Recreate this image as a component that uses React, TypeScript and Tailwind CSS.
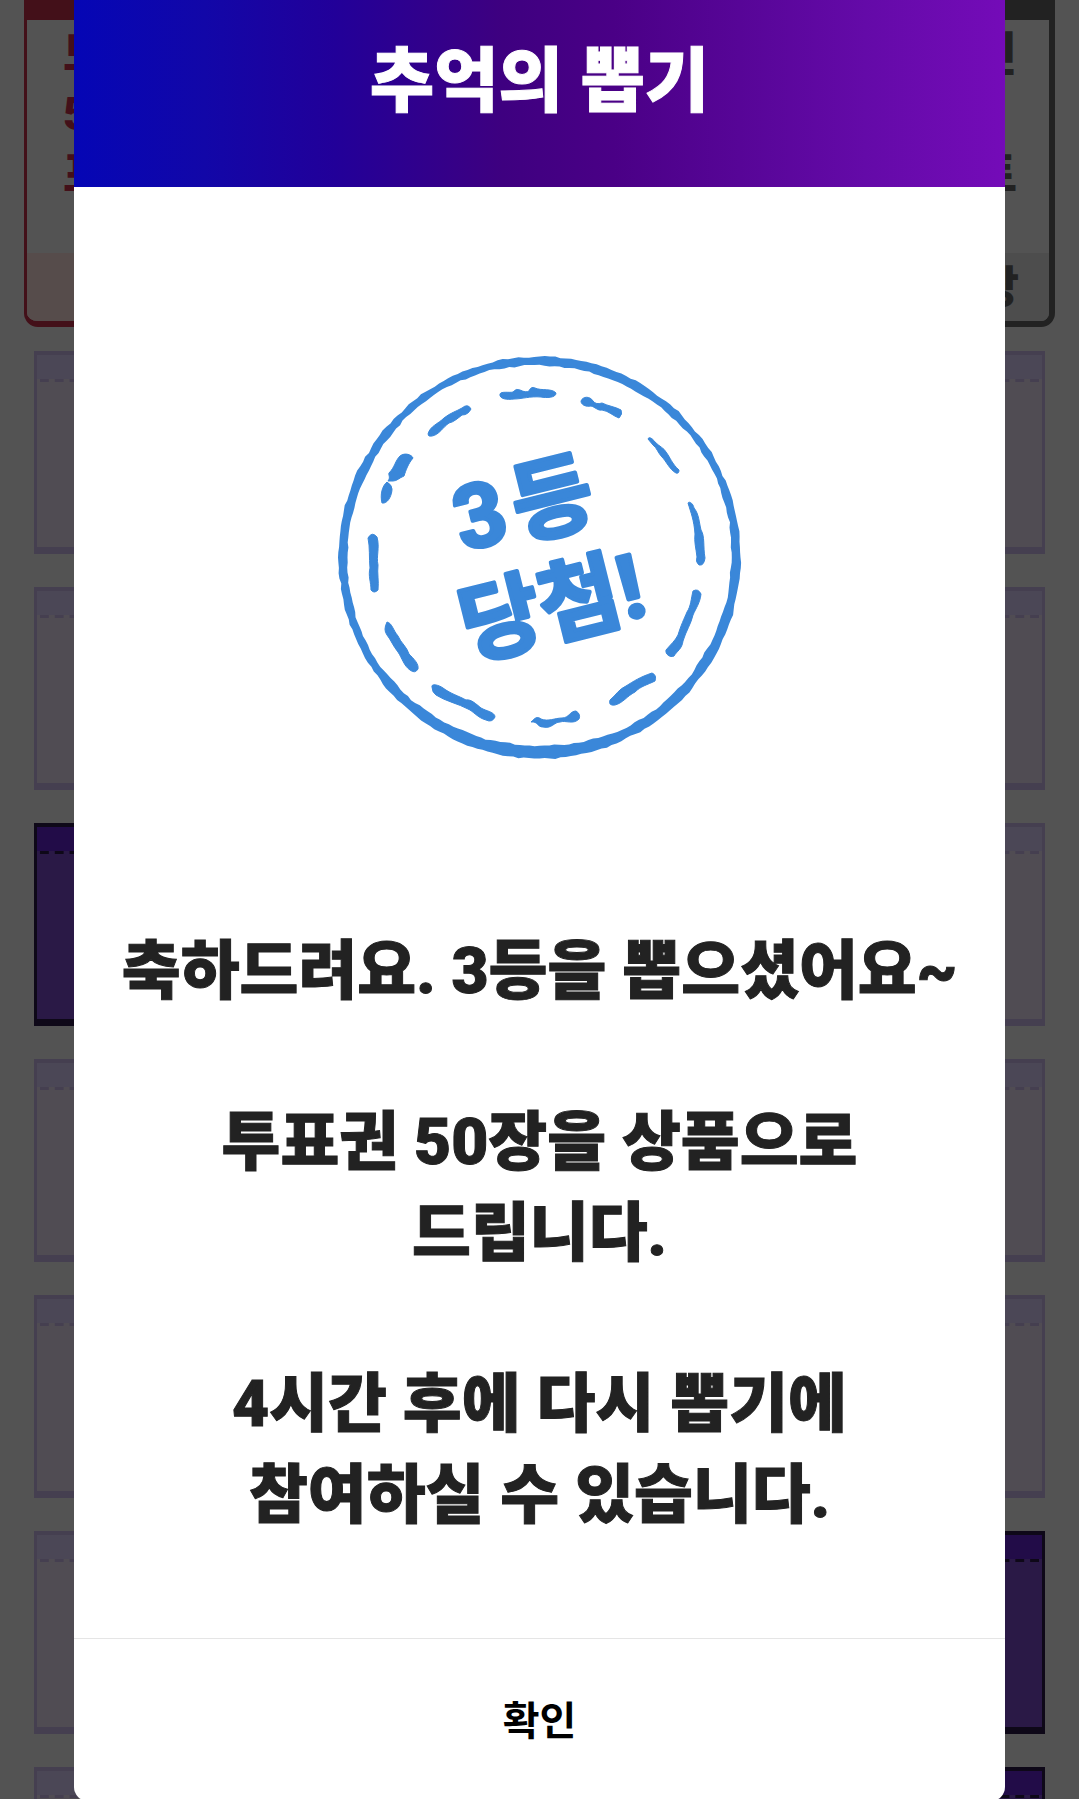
const FONT = "font-['Roboto','Noto_Sans_CJK_KR',sans-serif]";

type TicketTone = "used" | "open";

const ticketTones: Record<TicketTone, { box: string; top: string; dash: string }> = {
  used: {
    box: "border-[#453f50] bg-[#504c53]",
    top: "bg-[#4b4756]",
    dash: "bg-[linear-gradient(90deg,transparent_20%,#453f50_20%,#453f50_80%,transparent_80%)]",
  },
  open: {
    box: "border-[#0e0818] bg-[#2a1946]",
    top: "bg-[#220c48]",
    dash: "bg-[linear-gradient(90deg,transparent_20%,#0e0818_20%,#0e0818_80%,transparent_80%)]",
  },
};

const ticketRows: TicketTone[][] = [
  ["used", "used", "used", "used"],
  ["used", "used", "used", "used"],
  ["open", "used", "used", "used"],
  ["used", "used", "used", "used"],
  ["used", "used", "used", "used"],
  ["used", "used", "used", "open"],
  ["used", "used", "used", "open"],
];

function Ticket({ tone }: { tone: TicketTone }) {
  const t = ticketTones[tone];
  return (
    <div className={`h-[203px] border-x-3 border-t-4 border-b-7 ${t.box}`}>
      <div className={`h-6 ${t.top}`} />
      <div className={`h-[3px] bg-repeat-round bg-size-[15px_3px] ${t.dash}`} />
    </div>
  );
}

type PrizeCardProps = {
  lines: string[];
  count: string;
  frame: string;
  head: string;
  foot: string;
  align: string;
};

function PrizeCard({ lines, count, frame, head, foot, align }: PrizeCardProps) {
  return (
    <div
      className={`flex h-[327px] flex-col overflow-hidden rounded-b-[14px] border-b-6 border-l-3 font-black ${frame}`}
    >
      <div className={`h-5 shrink-0 ${head}`} />
      <div className={`flex-1 pt-1 pr-8 pl-9 text-[46px] ${align}`}>
        {lines.map((line, i) => (
          <p key={i} className="h-[60px] leading-[60px] whitespace-nowrap">
            {line}
          </p>
        ))}
      </div>
      <div className={`h-[68px] shrink-0 pr-[30px] text-[44px] leading-[70px] ${foot} ${align}`}>{count}</div>
    </div>
  );
}

// ring thickness every 30 degrees, clockwise from the right
const ringWidths = [9, 10, 10, 13, 11, 8, 9, 9, 7, 9, 9, 7];

function ringEdge(inner: boolean) {
  const points: string[] = [];
  for (let i = 0; i < 240; i++) {
    const deg = i * 1.5;
    const at = deg / 30;
    const from = ringWidths[Math.floor(at)];
    const to = ringWidths[(Math.floor(at) + 1) % 12];
    const width = from + (to - from) * (at % 1);
    const seed = inner ? 2.3 : 0;
    const rough =
      Math.sin(i * 0.7 + seed) * 0.4 + Math.sin(i * 1.9 + seed * 2) * 0.3 + Math.sin(i * i * 0.37 + seed) * 0.4;
    const r = (inner ? 201 - width : 201) + rough;
    const a = (deg * Math.PI) / 180;
    points.push(`${(219.5 + r * Math.cos(a)).toFixed(1)} ${(217.5 + r * Math.sin(a)).toFixed(1)}`);
  }
  return `M${points.join("L")}Z`;
}

const ringPath = ringEdge(false) + ringEdge(true);

const stitches = [
  "M180 54C181 51 190 53 193 52Q196 48 200 50Q206 53 209 51Q211 46 215 48C221 51 232 48 236 53C236 58 226 58 221 57C210 56 202 59 194 59C187 60 179 59 180 54Z",
  "M261 61C263 56 270 56 273 61Q276 65 282 63C288 66 296 67 301 70Q303 74 299 78C293 76 289 71 282 70C278 71 275 67 271 66C266 67 261 65 261 61Z",
  "M328 99C329 96 333 99 335 102C340 107 344 108 346 112C350 117 352 124 359 130Q359 134 356 133C350 130 346 121 342 117C338 113 337 108 333 105Z",
  "M368 163C369 161 373 163 374 168C379 174 379 182 381 190C385 196 383 207 385 218Q384 226 379 225Q375 222 377 217C376 208 374 202 375 194C374 180 371 173 368 163Z",
  "M373 251Q378 248 381 254C380 263 376 268 373 275C371 284 366 291 363 301C362 309 357 311 354 316C350 318 345 314 346 310C351 304 355 301 358 295C361 285 364 279 367 272C371 266 371 259 373 251Z",
  "M332 333Q337 335 335 341C327 345 321 346 315 352C307 356 303 363 295 365Q288 366 290 360C296 355 299 349 306 346C314 341 320 337 332 333Z",
  "M211 382C215 378 217 376 221 379C228 382 235 378 242 378C249 378 250 371 256 371Q261 374 259 379C253 385 246 380 240 382C234 382 232 389 223 387C217 387 218 381 211 382Z",
  "M112 347C111 343 119 345 123 348C131 354 139 356 146 360C151 359 156 364 161 368C166 371 175 372 175 377Q172 383 166 380C158 378 153 371 148 369C139 364 125 361 116 355Q112 352 112 347Z",
  "M67 282C72 283 73 290 78 296C81 303 87 307 89 314C94 319 99 324 98 329Q95 334 90 330C84 326 82 318 78 312C73 306 71 300 67 295Q63 290 67 282Z",
  "M48 198Q52 191 57 197C60 208 56 216 58 225C57 233 59 241 58 250Q54 254 51 250C51 242 48 236 50 228C49 218 50 207 48 198Z",
  "M62 163C60 155 62 146 67 142Q72 145 72 149C72 154 69 162 64 163ZM68 141C71 137 68 135 69 133C75 127 75 121 80 116C85 112 92 115 93 118C88 124 86 130 84 136C79 138 77 141 73 141Z",
  "M108 94C110 86 118 84 124 78C130 73 137 71 142 68Q148 63 151 69Q148 75 142 75C138 78 134 82 129 83C123 87 119 95 112 96Q108 97 108 94Z",
];

function Stamp() {
  return (
    <svg
      viewBox="0 0 440 440"
      className="h-[440px] w-[440px]"
      fill="#3a87d9"
      stroke="#3a87d9"
      strokeLinejoin="round"
      role="img"
      aria-label="3등 당첨!"
    >
      <path d={ringPath} fillRule="evenodd" strokeWidth="0" />
      {stitches.map((d) => (
        <path key={d} d={d} strokeWidth="1" />
      ))}
      <g className="text-[88px] font-bold" strokeWidth="4" transform="rotate(-14 144 212)">
        <text x="143" y="211">
          3
        </text>
        <text x="202" y="213">
          등
        </text>
        <text x="123" y="317">
          당첨!
        </text>
      </g>
    </svg>
  );
}

const messages = [
  ["축하드려요. 3등을 뽑으셨어요~"],
  ["투표권 50장을 상품으로", "드립니다."],
  ["4시간 후에 다시 뽑기에", "참여하실 수 있습니다."],
];

export default function App() {
  return (
    <div className={`relative h-screen min-h-[1799px] overflow-hidden bg-[#535353] ${FONT}`}>
      <div aria-hidden>
        <div className="grid grid-cols-3 gap-4 px-6">
          <PrizeCard
            lines={["모바일", "50장", "포인트"]}
            count="1장"
            frame="border-r-3 border-[#431019] text-[#431019]"
            head="bg-[#431019]"
            foot="bg-[#564c4b] pl-16"
            align="text-left"
          />
          <PrizeCard
            lines={[]}
            count=""
            frame="border-r-3 border-[#222]"
            head="bg-[#222]"
            foot="bg-[#4d4d4d]"
            align="text-center"
          />
          <PrizeCard
            lines={["할인", "", "포인트"]}
            count="50장"
            frame="border-r-6 border-[#222] text-[#222]"
            head="bg-[#222]"
            foot="bg-[#4d4d4d]"
            align="text-right"
          />
        </div>
        <div className="mt-6 grid grid-cols-4 gap-[33px] px-[34px]">
          {ticketRows.flatMap((row, r) => row.map((tone, c) => <Ticket key={`${r}-${c}`} tone={tone} />))}
        </div>
      </div>
      <section
        role="dialog"
        aria-labelledby="draw-title"
        className="absolute inset-x-[74px] top-0 flex flex-col overflow-hidden rounded-b-[14px] bg-white"
      >
        <h1
          id="draw-title"
          className="h-[187px] bg-[linear-gradient(90deg,#0506b5,#1207a8_14%,#220099_28%,#3e0080_46%,#4a0086_58%,#640aa8_85%,#740bb8)] pt-[26px] text-center text-[70px] leading-[112px] font-black text-white [-webkit-text-stroke:1px]"
        >
          추억의 뽑기
        </h1>
        <div className="flex justify-center pt-[153px] pb-[146px]">
          <Stamp />
        </div>
        <div className="flex flex-col gap-20 text-center text-[64px] leading-[91px] font-black text-[#222] [-webkit-text-stroke:1px]">
          {messages.map((lines) => (
            <p key={lines[0]}>
              {lines.map((line) => (
                <span key={line} className="block">
                  {line}
                </span>
              ))}
            </p>
          ))}
        </div>
        <button
          type="button"
          className="mt-[97px] h-[163px] border-t border-[#e5e5e5] pt-1 text-[40px] font-bold text-black"
        >
          확인
        </button>
      </section>
    </div>
  );
}
